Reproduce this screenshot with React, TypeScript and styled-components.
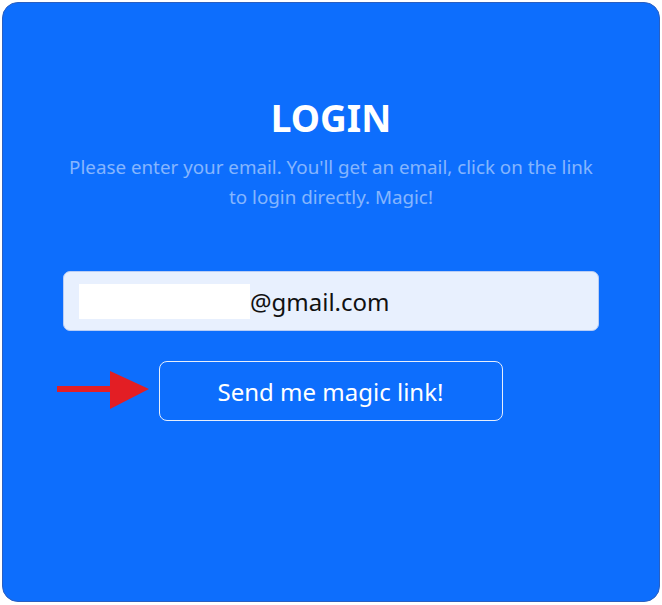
import React from "react";
import styled, { createGlobalStyle } from "styled-components";

const Global = createGlobalStyle`
  html, body { margin: 0; padding: 0; background: #ffffff; }
  body { font-family: "Noto Sans", "Open Sans", sans-serif; }
  * { box-sizing: border-box; }
`;

const Page = styled.div`
  padding: 2px;
  width: 662px;
  height: 605px;
`;

const Card = styled.div`
  position: relative;
  width: 658px;
  height: 600px;
  background: #0d6efd;
  border: 1px solid #2a5fc0;
  border-radius: 16px;
  display: flex;
  flex-direction: column;
  align-items: center;
  padding: 90px 40px 0;
`;

const Title = styled.h1`
  margin: 0;
  font-size: 37px;
  font-weight: 700;
  line-height: 50px;
  color: #ffffff;
`;

const Lead = styled.p`
  margin: 9px 0 0;
  font-size: 18.8px;
  line-height: 30px;
  text-align: center;
  color: rgba(255, 255, 255, 0.5);
`;

const Field = styled.div`
  margin-top: 59px;
  width: 536px;
  height: 60px;
  background: #e8f0fe;
  border: 1px solid #b9cdf5;
  border-radius: 7px;
  display: flex;
  align-items: center;
  padding: 0 15px;
  font-size: 24px;
  color: #111;
`;

const Redact = styled.span`
  display: inline-block;
  width: 171px;
  height: 35px;
  background: #ffffff;
`;

const ButtonRow = styled.div`
  margin-top: 30px;
  display: flex;
  justify-content: center;
  width: 100%;
`;

const MagicButton = styled.button`
  width: 344px;
  height: 60px;
  margin-left: -1px;
  background: transparent;
  border: 1px solid #e6eefc;
  border-radius: 8px;
  color: #ffffff;
  font-family: inherit;
  font-size: 24px;
`;

const Arrow = styled.svg`
  position: absolute;
  left: 53px;
  top: 367px;
`;

export default function App() {
  return (
    <Page>
      <Global />
      <Card>
        <Title>LOGIN</Title>
        <Lead>
          Please enter your email. You'll get an email, click on the link
          <br />
          to login directly. Magic!
        </Lead>
        <Field>
          <Redact />
          <span>@gmail.com</span>
        </Field>
        <ButtonRow>
          <MagicButton>Send me magic link!</MagicButton>
        </ButtonRow>
        <Arrow width="96" height="42" viewBox="0 0 96 42">
          <rect x="1" y="16" width="56" height="6" fill="#e31e24" />
          <polygon points="54,1 93,19 54,39" fill="#e31e24" />
        </Arrow>
      </Card>
    </Page>
  );
}
